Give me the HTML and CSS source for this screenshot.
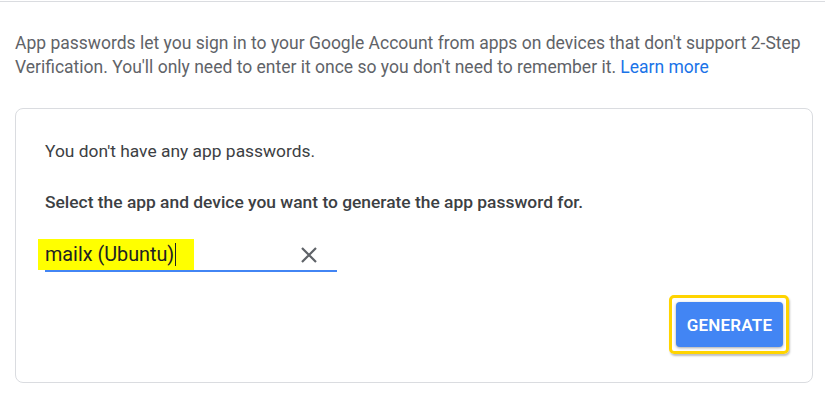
FILE: index.html
```html
<!DOCTYPE html>
<html>
<head>
<meta charset="utf-8">
<link rel="stylesheet" href="styles.css">
</head>
<body>
<div class="page">
  <p class="intro">App passwords let you sign in to your Google Account from apps on devices that don't support 2-Step Verification. You'll only need to enter it once so you don't need to remember it. <a class="link" href="#">Learn more</a></p>
  <div class="card">
    <p class="empty">You don't have any app passwords.</p>
    <p class="select">Select the app and device you want to generate the app password for.</p>
    <div class="field">
      <span class="value"><span class="hl">mailx (Ubuntu)<span class="caret"></span></span></span>
      <svg class="clear" width="18" height="18" viewBox="0 0 18 18"><path d="M2 2L16 16M16 2L2 16" stroke="#5f6368" stroke-width="2.2" fill="none"/></svg>
    </div>
    <div class="actions">
      <span class="outline"><button class="btn">GENERATE</button></span>
    </div>
  </div>
</div>
</body>
</html>
```
FILE: styles.css
```css
html, body { margin: 0; padding: 0; background: #fff; }
body { font-family: Roboto, "Liberation Sans", sans-serif; }
.page {
  border-top: 1px solid #dadce0;
  margin-top: 1px;
  padding: 0 12px 0 15px;
}
.intro {
  margin: 0;
  padding-top: 29px;
  font-size: 17.5px;
  line-height: 24px;
  color: #5f6368;
}
.link { color: #1a73e8; text-decoration: none; }
.card {
  margin-top: 29px;
  border: 1px solid #dadce0;
  border-radius: 8px;
  height: 273px;
  padding: 0 29px;
  box-sizing: content-box;
}
.empty {
  margin: 30px 0 0;
  font-size: 17.4px;
  line-height: 24px;
  color: #3c4043;
}
.select {
  margin: 27px 0 0;
  font-size: 17.4px;
  line-height: 24px;
  font-weight: 500;
  color: #3c4043;
}
.field {
  margin-top: 24px;
  width: 292px;
  height: 32px;
  border-bottom: 2px solid #4285f4;
  display: flex;
  align-items: center;
  justify-content: space-between;
}
.value { font-size: 19.8px; color: #202124; }
.hl {
  background: #ffff00;
  display: inline-block;
  margin-left: -7px;
  padding: 4px 18px 4px 7px;
  line-height: 22px;
}
.caret {
  display: inline-block;
  width: 1px;
  height: 23px;
  background: #202124;
  vertical-align: -5px;
  margin-left: 1px;
}
.clear { margin-right: 19px; margin-top: 2px; }
.actions {
  display: flex;
  justify-content: flex-end;
  margin-top: 23px;
  margin-right: -6px;
}
.outline {
  display: inline-flex;
  border: 3px solid #ffd400;
  border-radius: 5px;
  padding: 4px 3px 4px 4px;
  box-shadow: 1px 2px 2px rgba(0,0,0,0.25);
}
.btn {
  font-family: Roboto, "Liberation Sans", sans-serif;
  font-size: 17px;
  font-weight: 600;
  letter-spacing: 0.2px;
  color: #fff;
  background: #4285f4;
  border: none;
  border-radius: 4px;
  width: 107px;
  height: 45px;
  padding: 0;
  box-shadow: 0 1px 3px rgba(0,0,0,0.35);
}
```
